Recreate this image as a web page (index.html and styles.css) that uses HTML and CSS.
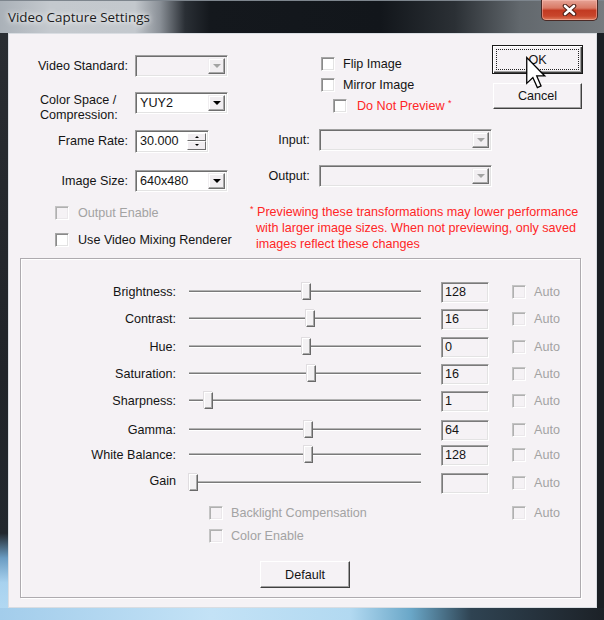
FILE: index.html
```html
<!DOCTYPE html>
<html>
<head>
<meta charset="utf-8">
<title>Video Capture Settings</title>
<link rel="stylesheet" href="styles.css">
</head>
<body>
<div class="window">
  <div class="titlebar">
    <span class="title">Video Capture Settings</span>
    <div class="close">
      <svg width="15" height="12" viewBox="0 0 15 12">
        <path d="M3 2 L12 10 M12 2 L3 10" stroke="#4a1e16" stroke-width="4.6" stroke-linecap="round" fill="none"/>
        <path d="M3 2 L12 10 M12 2 L3 10" stroke="#ffffff" stroke-width="2.6" stroke-linecap="round" fill="none"/>
      </svg>
    </div>
  </div>
  <div class="client">
    <div class="top">
      <div class="col-left">
        <div class="frow r1">
          <span class="lbl">Video Standard:</span>
          <div class="combo dis"><span class="field"></span><span class="arrow"><i class="tri"></i></span></div>
        </div>
        <div class="frow r2">
          <span class="lbl two">Color Space /<br>Compression:</span>
          <div class="combo"><span class="field">YUY2</span><span class="arrow"><i class="tri"></i></span></div>
        </div>
        <div class="frow r3">
          <span class="lbl">Frame Rate:</span>
          <div class="spinedit">
            <span class="field">30.000</span>
            <span class="spin"><span class="sb"><i class="up"></i></span><span class="sb"><i class="dn"></i></span></span>
          </div>
        </div>
        <div class="frow r4">
          <span class="lbl">Image Size:</span>
          <div class="combo"><span class="field">640x480</span><span class="arrow"><i class="tri"></i></span></div>
        </div>
        <div class="chkrow oe"><span class="chk dis"></span><span class="ctext dtext">Output Enable</span></div>
        <div class="chkrow vmr"><span class="chk"></span><span class="ctext">Use Video Mixing Renderer</span></div>
      </div>
      <div class="col-mid">
        <div class="chkrow flip"><span class="chk"></span><span class="ctext">Flip Image</span></div>
        <div class="chkrow mirror"><span class="chk"></span><span class="ctext">Mirror Image</span></div>
        <div class="chkrow dnp"><span class="chk"></span><span class="ctext red">Do Not Preview <sup>*</sup></span></div>
        <div class="frow io in">
          <span class="lbl io-lbl">Input:</span>
          <div class="combo dis wide"><span class="field"></span><span class="arrow"><i class="tri"></i></span></div>
        </div>
        <div class="frow io out">
          <span class="lbl io-lbl">Output:</span>
          <div class="combo dis wide"><span class="field"></span><span class="arrow"><i class="tri"></i></span></div>
        </div>
        <p class="note"><sup>*</sup> Previewing these transformations may lower performance<br>with larger image sizes. When not previewing, only saved<br>images reflect these changes</p>
      </div>
      <div class="col-right">
        <div class="btn ok">OK</div>
        <div class="btn cancel">Cancel</div>
      </div>
    </div>
    <div class="group">
      <div class="sliders">
        <span class="slbl">Brightness:</span>
        <div class="slider"><div class="track"></div><div class="thumb" style="left:113px"></div></div>
        <div class="val">128</div>
        <div class="auto"><span class="chk dis"></span>Auto</div>

        <span class="slbl">Contrast:</span>
        <div class="slider"><div class="track"></div><div class="thumb" style="left:117px"></div></div>
        <div class="val">16</div>
        <div class="auto"><span class="chk dis"></span>Auto</div>

        <span class="slbl">Hue:</span>
        <div class="slider"><div class="track"></div><div class="thumb" style="left:113px"></div></div>
        <div class="val">0</div>
        <div class="auto"><span class="chk dis"></span>Auto</div>

        <span class="slbl">Saturation:</span>
        <div class="slider"><div class="track"></div><div class="thumb" style="left:118px"></div></div>
        <div class="val">16</div>
        <div class="auto"><span class="chk dis"></span>Auto</div>

        <span class="slbl">Sharpness:</span>
        <div class="slider"><div class="track"></div><div class="thumb" style="left:15px"></div></div>
        <div class="val">1</div>
        <div class="auto"><span class="chk dis"></span>Auto</div>

        <span class="slbl">Gamma:</span>
        <div class="slider"><div class="track"></div><div class="thumb" style="left:115px"></div></div>
        <div class="val">64</div>
        <div class="auto"><span class="chk dis"></span>Auto</div>

        <span class="slbl">White Balance:</span>
        <div class="slider"><div class="track"></div><div class="thumb" style="left:115px"></div></div>
        <div class="val">128</div>
        <div class="auto"><span class="chk dis"></span>Auto</div>

        <span class="slbl gain">Gain</span>
        <div class="slider"><div class="track"></div><div class="thumb" style="left:0px"></div></div>
        <div class="val"></div>
        <div class="auto"><span class="chk dis"></span>Auto</div>

        <div class="chkrow extra"><span class="chk dis"></span><span class="ctext dtext">Backlight Compensation</span></div>
        <div class="auto"><span class="chk dis"></span>Auto</div>

        <div class="chkrow extra"><span class="chk dis"></span><span class="ctext dtext">Color Enable</span></div>

        <div class="btn default">Default</div>
      </div>
    </div>
  </div>
  <svg class="cursor" width="22" height="33" viewBox="0 0 13.5 20.5">
    <path d="M1 1 L1 17 L4.8 13.4 L7.6 19.6 L9.9 18.6 L7.2 12.4 L12.2 12.4 Z" fill="#ffffff" stroke="#000000" stroke-width="0.8" stroke-linejoin="miter"/>
  </svg>
</div>
</body>
</html>
```
FILE: styles.css
```css
html, body {
  margin: 0;
  padding: 0;
}
body {
  background: #1b1f24;
  font-family: "Liberation Sans", Arial, sans-serif;
  font-size: 12.6px;
  color: #141414;
}
.window {
  position: relative;
  width: 604px;
  height: 620px;
  overflow: hidden;
  background:
    linear-gradient(to right, #a3cdeb 0%, #c3e2f6 35%, #b2d9f1 58%, #6aa7c8 68%, #2f4352 78%, #1c2127 100%) left bottom / 100% 12px no-repeat,
    linear-gradient(to bottom, #2a2e33 0%, #202429 60%, #22282e 86%, #6a9cc2 90%, #a8d2ef 94%, #b6dbf4 100%) left top / 8px 100% no-repeat,
    #1b1f24;
}
.titlebar {
  height: 33px;
  display: flex;
  justify-content: space-between;
  align-items: flex-start;
  box-sizing: border-box;
  border-top: 1px solid #7d858d;
  background:
    linear-gradient(to right, #aab1b8 0px, #c4c9ce 50px, #c3c8cd 135px, #8a9097 160px, #2a2f35 185px, #14181d 210px, #12161b 380px, #2b3035 455px, #62686d 520px, #767b7f 604px);
}
.title {
  font-family: "Open Sans", "Noto Sans", sans-serif;
  font-size: 13.4px;
  color: #1b1b1b;
  padding-left: 8px;
  line-height: 32px;
  text-shadow: 0 0 5px #ffffff, 0 0 9px rgba(255,255,255,0.8);
}
.close {
  width: 57px;
  height: 21px;
  margin-right: 6px;
  margin-top: -1px;
  box-sizing: border-box;
  border: 1px solid #4a2a26;
  border-top: none;
  border-radius: 0 0 5px 5px;
  background: linear-gradient(to bottom, #e6a396 0%, #d97a66 40%, #c23a22 52%, #c8462c 80%, #dd7b5c 100%);
  box-shadow: inset 0 0 0 1px rgba(255,200,190,0.45);
  display: flex;
  align-items: center;
  justify-content: center;
}
.client {
  margin-left: 8px;
  width: 589px;
  height: 575px;
  box-sizing: border-box;
  border: 1px solid #d9dde2;
  background: #f5f2f5;
}
.top {
  display: flex;
  height: 224px;
}
.col-left {
  width: 241px;
  padding-top: 21px;
  box-sizing: border-box;
}
.col-mid {
  width: 242px;
  padding-top: 23px;
  box-sizing: border-box;
}
.col-right {
  width: 91px;
  padding-top: 11px;
  box-sizing: border-box;
}
.frow {
  display: flex;
  align-items: center;
  height: 22px;
}
.lbl {
  width: 119px;
  margin-right: 7px;
  text-align: right;
  white-space: nowrap;
}
.lbl.two {
  align-self: flex-start;
  text-align: left;
  padding-left: 31px;
  width: 88px;
  line-height: 15px;
  padding-top: 1px;
}
.r2 { margin-top: 15px; }
.r3 { margin-top: 16px; }
.r4 { margin-top: 18px; }
.combo {
  display: flex;
  width: 93px;
  height: 22px;
  box-sizing: border-box;
  border: 1px solid;
  border-color: #a0a0a0 #ffffff #ffffff #a0a0a0;
  box-shadow: inset 1px 1px 0 #6e6e6e, inset -1px -1px 0 #e3e3e3;
  background: #ffffff;
  padding: 2px;
}
.combo.dis {
  background: #f5f2f5;
}
.combo.wide {
  width: 174px;
}
.field {
  flex: 1;
  line-height: 17px;
  padding-left: 2px;
  white-space: nowrap;
}
.arrow {
  width: 17px;
  box-sizing: border-box;
  border: 1px solid;
  border-color: #f0eef0 #6e6e6e #6e6e6e #f0eef0;
  box-shadow: inset -1px -1px 0 #a8a8a8, inset 1px 1px 0 #ffffff;
  background: #f1eef1;
  display: flex;
  align-items: center;
  justify-content: center;
}
.tri {
  width: 0;
  height: 0;
  border-left: 4px solid transparent;
  border-right: 4px solid transparent;
  border-top: 4px solid #000;
}
.dis .tri {
  border-top-color: #a3a3a3;
}
.spinedit {
  display: flex;
  width: 74px;
  height: 23px;
  box-sizing: border-box;
  border: 1px solid;
  border-color: #a0a0a0 #ffffff #ffffff #a0a0a0;
  box-shadow: inset 1px 1px 0 #6e6e6e, inset -1px -1px 0 #e3e3e3;
  background: #ffffff;
  padding: 2px 2px 2px 2px;
}
.spin {
  width: 19px;
  display: flex;
  flex-direction: column;
}
.sb {
  flex: 1;
  box-sizing: border-box;
  border: 1px solid;
  border-color: #ffffff #6e6e6e #6e6e6e #ffffff;
  background: #f1eef1;
  display: flex;
  align-items: center;
  justify-content: center;
}
.up {
  width: 0;
  height: 0;
  border-left: 2px solid transparent;
  border-right: 2px solid transparent;
  border-bottom: 2px solid #000;
}
.dn {
  width: 0;
  height: 0;
  border-left: 2px solid transparent;
  border-right: 2px solid transparent;
  border-top: 2px solid #000;
}
.chkrow {
  display: flex;
  align-items: center;
  height: 14px;
  white-space: nowrap;
}
.chk {
  flex: none;
  width: 14px;
  height: 14px;
  box-sizing: border-box;
  border: 1px solid;
  border-color: #a6a6a6 #ffffff #ffffff #a6a6a6;
  box-shadow: inset 1px 1px 0 #8a8a8a, inset -1px -1px 0 #e3e3e3;
  background: #ffffff;
}
.chk.dis {
  background: #f5f2f5;
  border-color: #c4c4c4 #ffffff #ffffff #c4c4c4;
  box-shadow: inset 1px 1px 0 #b0b0b0, inset -1px -1px 0 #ebe8eb;
}
.ctext {
  margin-left: 9px;
}
.dtext {
  color: #a3a3a3;
}
.red {
  color: #ff2626;
}
sup {
  font-size: 9px;
  vertical-align: 4px;
  line-height: 0;
}
.oe {
  margin-top: 14px;
  padding-left: 46px;
}
.vmr {
  margin-top: 13px;
  padding-left: 46px;
}
.flip {
  padding-left: 71px;
}
.flip .ctext, .mirror .ctext {
  margin-left: 8px;
}
.mirror {
  margin-top: 7px;
  padding-left: 71px;
}
.dnp {
  margin-top: 7px;
  padding-left: 83px;
}
.dnp .ctext {
  margin-left: 10px;
}
.io-lbl {
  width: 60px;
  margin-right: 9px;
}
.io.in {
  margin-top: 16px;
}
.io.out {
  margin-top: 14px;
}
.note {
  margin: 17px 0 0 0;
  padding-left: 6px;
  text-indent: -6px;
  line-height: 16px;
  color: #ff2626;
  white-space: nowrap;
}
.btn {
  display: flex;
  align-items: center;
  justify-content: center;
  box-sizing: border-box;
  background: #f5f2f5;
  border: 1px solid;
  border-color: #ffffff #404040 #404040 #ffffff;
  box-shadow: inset -1px -1px 0 #a0a0a0;
}
.btn.ok {
  width: 91px;
  height: 29px;
  border: 1px solid #1a1a1a;
  box-shadow: inset 1px 1px 0 #ffffff, inset -1px -1px 0 #404040, inset -2px -2px 0 #a0a0a0;
  outline: 1px dotted #202020;
  outline-offset: -5px;
}
.btn.cancel {
  width: 89px;
  height: 26px;
  margin-top: 9px;
  margin-left: 1px;
}
.group {
  margin-left: 11px;
  width: 561px;
  height: 340px;
  box-sizing: border-box;
  border: 1px solid #aeabaf;
  box-shadow: inset 1px 1px 0 #ffffff, 1px 1px 0 #ffffff;
}
.sliders {
  display: grid;
  grid-template-columns: 168px 252px 71px 1fr;
  grid-template-rows: 27px 28px 27px 27px 29px 25px 28px 33px 23px 32px 27px;
  padding-top: 23px;
  align-items: start;
}
.slbl {
  grid-column: 1;
  height: 21px;
  line-height: 21px;
  text-align: right;
  padding-right: 13px;
  white-space: nowrap;
}
.slbl.gain {
  line-height: 17px;
}
.slider {
  grid-column: 2;
  position: relative;
  width: 232px;
  height: 21px;
}
.track {
  margin-top: 8px;
  height: 1px;
  background: #7a7a7a;
  border-top: 1px solid #b4b4b4;
  border-bottom: 1px solid #ffffff;
}
.thumb {
  position: absolute;
  top: 1px;
  width: 9px;
  height: 17px;
  box-sizing: border-box;
  background: #f3f1f3;
  border: 1px solid;
  border-color: #ffffff #696969 #696969 #ffffff;
  box-shadow: inset -1px -1px 0 #a8a8a8, -1px -1px 0 #e0dde0;
}
.val {
  grid-column: 3;
  width: 48px;
  height: 21px;
  box-sizing: border-box;
  border: 1px solid;
  border-color: #a0a0a0 #ffffff #ffffff #a0a0a0;
  box-shadow: inset 1px 1px 0 #7a7a7a, inset -1px -1px 0 #e3e3e3;
  background: #f5f2f5;
  padding-left: 3px;
  line-height: 19px;
}
.auto {
  grid-column: 4;
  display: flex;
  align-items: center;
  gap: 8px;
  height: 14px;
  margin-top: 3px;
  color: #a3a3a3;
}
.chkrow.extra {
  grid-column: 2 / span 2;
  margin-left: 20px;
}
.chkrow.extra .ctext {
  margin-left: 8px;
}
.sliders .chkrow.extra + .auto {
  margin-top: 0;
}
.btn.default {
  grid-column: 2;
  margin-left: 71px;
  width: 90px;
  height: 27px;
}
.cursor {
  position: absolute;
  left: 525px;
  top: 56px;
}
```
